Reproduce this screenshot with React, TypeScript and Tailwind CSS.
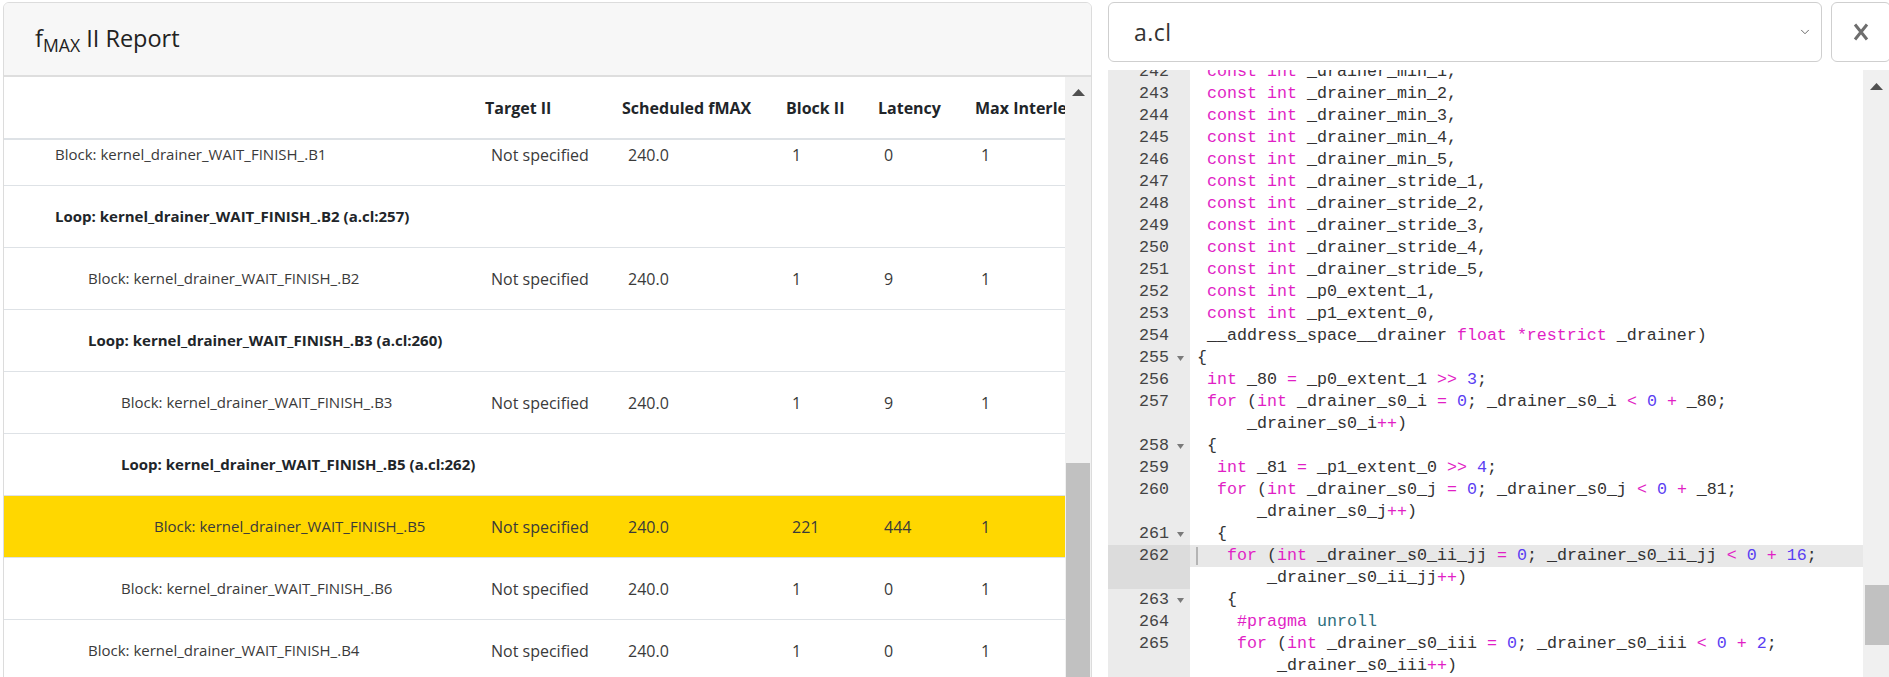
import React from "react";
import { ChevronDown } from "lucide-react";

type Row = {
  label: string;
  lvl: number;
  bold?: boolean;
  hl?: boolean;
  vals?: string[];
};

const rows: Row[] = [
  { label: "Block: kernel_drainer_WAIT_FINISH_.B1", lvl: 0, vals: ["Not specified", "240.0", "1", "0", "1"] },
  { label: "Loop: kernel_drainer_WAIT_FINISH_.B2 (a.cl:257)", lvl: 0, bold: true },
  { label: "Block: kernel_drainer_WAIT_FINISH_.B2", lvl: 1, vals: ["Not specified", "240.0", "1", "9", "1"] },
  { label: "Loop: kernel_drainer_WAIT_FINISH_.B3 (a.cl:260)", lvl: 1, bold: true },
  { label: "Block: kernel_drainer_WAIT_FINISH_.B3", lvl: 2, vals: ["Not specified", "240.0", "1", "9", "1"] },
  { label: "Loop: kernel_drainer_WAIT_FINISH_.B5 (a.cl:262)", lvl: 2, bold: true },
  { label: "Block: kernel_drainer_WAIT_FINISH_.B5", lvl: 3, hl: true, vals: ["Not specified", "240.0", "221", "444", "1"] },
  { label: "Block: kernel_drainer_WAIT_FINISH_.B6", lvl: 2, vals: ["Not specified", "240.0", "1", "0", "1"] },
  { label: "Block: kernel_drainer_WAIT_FINISH_.B4", lvl: 1, vals: ["Not specified", "240.0", "1", "0", "1"] },
];

const indent = ["pl-[51px]", "pl-[84px]", "pl-[117px]", "pl-[150px]"];

type VL = { n?: number; fold?: boolean; text: string; active?: boolean; ga?: boolean };

const lines: VL[] = [
  { n: 242, text: " const int _drainer_min_1," },
  { n: 243, text: " const int _drainer_min_2," },
  { n: 244, text: " const int _drainer_min_3," },
  { n: 245, text: " const int _drainer_min_4," },
  { n: 246, text: " const int _drainer_min_5," },
  { n: 247, text: " const int _drainer_stride_1," },
  { n: 248, text: " const int _drainer_stride_2," },
  { n: 249, text: " const int _drainer_stride_3," },
  { n: 250, text: " const int _drainer_stride_4," },
  { n: 251, text: " const int _drainer_stride_5," },
  { n: 252, text: " const int _p0_extent_1," },
  { n: 253, text: " const int _p1_extent_0," },
  { n: 254, text: " __address_space__drainer float *restrict _drainer)" },
  { n: 255, fold: true, text: "{" },
  { n: 256, text: " int _80 = _p0_extent_1 >> 3;" },
  { n: 257, text: " for (int _drainer_s0_i = 0; _drainer_s0_i < 0 + _80;" },
  { text: "     _drainer_s0_i++)" },
  { n: 258, fold: true, text: " {" },
  { n: 259, text: "  int _81 = _p1_extent_0 >> 4;" },
  { n: 260, text: "  for (int _drainer_s0_j = 0; _drainer_s0_j < 0 + _81;" },
  { text: "      _drainer_s0_j++)" },
  { n: 261, fold: true, text: "  {" },
  { n: 262, text: "   for (int _drainer_s0_ii_jj = 0; _drainer_s0_ii_jj < 0 + 16;", active: true, ga: true },
  { text: "       _drainer_s0_ii_jj++)", ga: true },
  { n: 263, fold: true, text: "   {" },
  { n: 264, text: "    #pragma unroll" },
  { n: 265, text: "    for (int _drainer_s0_iii = 0; _drainer_s0_iii < 0 + 2;" },
  { text: "        _drainer_s0_iii++)" },
  { n: 266, text: "    {" },
];

const RE = /(\*restrict|#pragma|\bconst\b|\bint\b|\bfor\b|\bfloat\b|\bunroll\b|>>|\+\+|<|\+|=|\b\d+\b)/;

function tokens(s: string) {
  return s
    .split(RE)
    .filter((t) => t !== "" && t !== undefined)
    .map((t, i) => {
      let cls = "text-[#333333]";
      if (/^(\*restrict|#pragma|const|int|for|float|>>|\+\+|<|\+|=)$/.test(t)) cls = "text-[#e11fc5]";
      else if (t === "unroll") cls = "text-[#2f6e7b]";
      else if (/^\d+$/.test(t)) cls = "text-[#5a3ef2]";
      return (
        <span key={i} className={cls}>
          {t}
        </span>
      );
    });
}

function UpArrow() {
  return (
    <svg width="13" height="7" viewBox="0 0 13 7">
      <path d="M0 7h13L6.5 0z" fill="#505050" />
    </svg>
  );
}

function FoldArrow() {
  return (
    <svg width="7" height="5" viewBox="0 0 7 5">
      <path d="M0 0h7L3.5 5z" fill="#7a7a7a" />
    </svg>
  );
}

export default function App() {
  return (
    <div className="w-[1889px] h-[677px] overflow-hidden bg-white flex font-['Open_Sans',sans-serif]">
      {/* Left card */}
      <div className="pl-[3px] pt-[2px] w-[1092px] shrink-0">
        <div className="h-[720px] border border-[#dcdcdc] rounded-[6px] flex flex-col overflow-hidden">
          <div className="h-[74px] shrink-0 bg-[#f7f7f7] border-b-2 border-[#dedede] flex items-center pl-[31px] text-[23.5px] text-[#222222]">
            <span>
              f<sub>MAX</sub> II Report
            </span>
          </div>
          <div className="flex flex-1 min-h-0">
            <div className="flex-1 flex flex-col overflow-hidden">
              <div className="h-[63px] shrink-0 border-b-2 border-[#dee2e6] grid grid-cols-[475px_137px_164px_92px_97px_1fr] items-center text-[16px] font-bold text-[#212529] whitespace-nowrap">
                <div></div>
                <div className="pl-[6px]">Target II</div>
                <div className="pl-[6px]">Scheduled fMAX</div>
                <div className="pl-[6px]">Block II</div>
                <div className="pl-[6px]">Latency</div>
                <div className="pl-[6px] overflow-hidden">Max Interleaving Iterations</div>
              </div>
              <div className="flex-1 overflow-hidden">
                <div className="-mt-[16px]">
                  {rows.map((r, i) => (
                    <div
                      key={i}
                      className={
                        "h-[62px] border-b border-[#dee2e6] grid grid-cols-[475px_137px_164px_92px_97px_1fr] items-center whitespace-nowrap " +
                        (r.hl ? "bg-[#ffd700] " : "") +
                        (r.bold ? "font-bold text-[#212529]" : "text-[#3a3a3a]")
                      }
                    >
                      <div className={"text-[15px] " + indent[r.lvl]}>{r.label}</div>
                      {r.vals ? (
                        r.vals.map((v, j) => (
                          <div key={j} className="pl-[12px] text-[16px]">
                            {v}
                          </div>
                        ))
                      ) : null}
                    </div>
                  ))}
                </div>
              </div>
            </div>
            <div className="w-[26px] shrink-0 bg-[#f1f1f1] flex flex-col items-center">
              <div className="h-[30px] flex items-center justify-center pl-[1px]">
                <UpArrow />
              </div>
              <div className="mt-[356px] w-[24px] flex-1 bg-[#c1c1c1]"></div>
            </div>
          </div>
        </div>
      </div>

      {/* Right panel */}
      <div className="ml-[16px] w-[781px] shrink-0 flex flex-col pt-[2px] overflow-hidden">
        <div className="flex h-[60px] gap-[9px] shrink-0">
          <div className="w-[714px] shrink-0 border border-[#cfcfcf] rounded-[6px] flex items-center justify-between pl-[25px] pr-[9px] text-[23px] tracking-[0.5px] text-[#333333]">
            <span>a.cl</span>
            <ChevronDown size={14} strokeWidth={1.5} color="#555555" />
          </div>
          <div className="w-[60px] shrink-0 border border-[#cfcfcf] rounded-[6px] flex items-center justify-center">
            <svg width="16" height="18" viewBox="0 0 16 18">
              <path d="M2 1.5 14 16.5M14 1.5 2 16.5" stroke="#6e6e6e" strokeWidth="3" />
            </svg>
          </div>
        </div>
        <div className="mt-[8px] flex-1 min-h-0 flex overflow-hidden font-['Liberation_Mono',monospace] text-[16.67px] leading-[22px]">
          <div className="w-[82px] shrink-0 bg-[#ebebeb] overflow-hidden">
            <div className="-mt-[9px]">
              {lines.map((l, i) => (
                <div key={i} className={"h-[22px] flex items-center text-[#444444] " + (l.ga ? "bg-[#dcdcdc]" : "")}>
                  <div className="w-[61px] text-right">{l.n ?? ""}</div>
                  <div className="w-[21px] flex items-center pl-[8px]">{l.fold ? <FoldArrow /> : null}</div>
                </div>
              ))}
            </div>
          </div>
          <div className="flex-1 overflow-hidden">
            <div className="-mt-[9px]">
              {lines.map((l, i) => (
                <div
                  key={i}
                  className={"relative h-[22px] pl-[7px] whitespace-pre " + (l.active ? "bg-[#e8e8e8]" : "")}
                >
                  {l.active ? <span className="absolute left-[6px] top-[2px] w-[2px] h-[18px] bg-[#b4b4b4]"></span> : null}
                  {tokens(l.text)}
                </div>
              ))}
            </div>
          </div>
          <div className="w-[26px] shrink-0 bg-[#f0f0f0] flex flex-col items-center">
            <div className="h-[32px] flex items-center justify-center">
              <UpArrow />
            </div>
            <div className="mt-[483px] ml-[2px] w-[24px] h-[60px] bg-[#c1c1c1]"></div>
          </div>
        </div>
      </div>
    </div>
  );
}
